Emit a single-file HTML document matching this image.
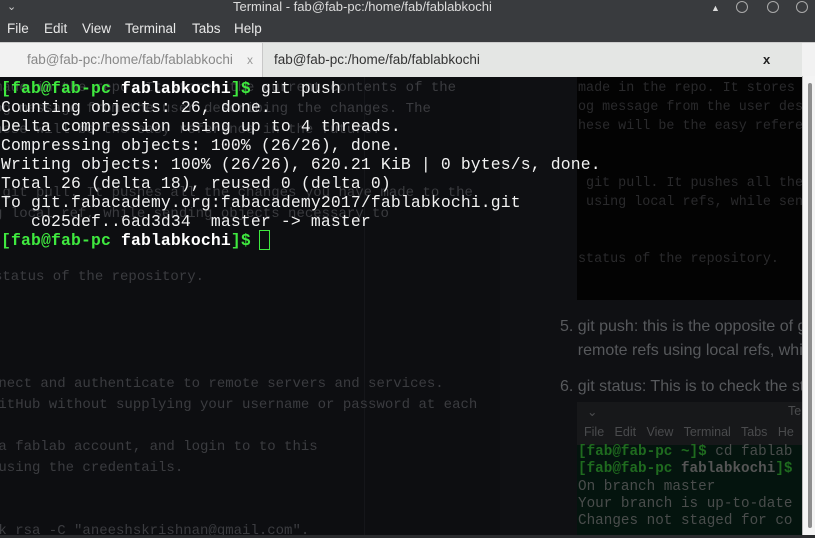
<!DOCTYPE html>
<html><head><meta charset="utf-8"><style>
*{margin:0;padding:0;box-sizing:border-box}
body{width:815px;height:538px;overflow:hidden;background:#0e0f12;font-family:"Liberation Sans",sans-serif;position:relative}
.title{position:absolute;left:0;top:0;width:815px;height:16px;background:#393b3e;color:#dcdcdc;font-size:13px;line-height:14px}
.menu{position:absolute;left:0;top:16px;width:815px;height:26px;background:#393b3e;color:#e8e8e8;font-size:13.5px}
.menu span{position:absolute;top:5px}
.tabs{position:absolute;left:0;top:42px;width:815px;height:35px;background:#f2f2f2;border-top:1px solid #ccc}
.tab2{position:absolute;left:262px;top:0;width:540px;height:34px;background:#e4e6e4;border-left:1px solid #c8c8c8}
.tabs span{position:absolute;font-size:13.5px;top:9px}
.term{position:absolute;left:0;top:77px;width:802px;height:458px;background:#0d0e11;overflow:hidden}
.mono{font-family:"Liberation Mono","DejaVu Sans Mono",monospace;font-size:16.4px;line-height:19px;white-space:pre;position:absolute;letter-spacing:0.16px}
.ghost{color:#3b3c40;font-size:14px;line-height:21px;letter-spacing:0}
.fg{color:#f2f2f2}
.g{color:#3fe83f;font-weight:bold}
.w{color:#fff;font-weight:bold}
.sb{position:absolute;left:802px;top:76px;width:13px;height:459px;background:#f4f4f4;border-left:1px solid #bbb}
.thumb{position:absolute;left:5px;top:7px;width:4px;height:445px;background:#8e8e8e;border-radius:2px}
</style></head><body>
<div class="title">
<span style="position:absolute;left:7px;top:0;color:#ccc;font-size:11px">⌄</span>
<span style="position:absolute;left:233px;top:0">Terminal - fab@fab-pc:/home/fab/fablabkochi</span>
<span style="position:absolute;left:711px;top:1px;font-size:9px">▲</span>
<span style="position:absolute;left:736px;top:1px;width:12px;height:12px;border:1.5px solid #aaa;border-radius:50%"></span>
<span style="position:absolute;left:767px;top:1px;width:12px;height:12px;border:1.5px solid #aaa;border-radius:50%"></span>
<span style="position:absolute;left:796px;top:1px;width:12px;height:12px;border:1.5px solid #aaa;border-radius:50%"></span>
</div>
<div class="menu"><span style="left:7px">File</span><span style="left:44px">Edit</span><span style="left:82px">View</span><span style="left:125px">Terminal</span><span style="left:192px">Tabs</span><span style="left:234px">Help</span></div>
<div class="tabs">
<span style="left:27px;color:#888">fab@fab-pc:/home/fab/fablabkochi</span>
<span style="left:247px;color:#999;font-size:12px;top:10px">x</span>
<div class="tab2"><span style="left:11px;color:#333">fab@fab-pc:/home/fab/fablabkochi</span><span style="left:500px;color:#222;font-size:13px;font-weight:bold;top:9px">x</span></div>
</div>
<div class="term">
<div style="position:absolute;left:364px;top:0;width:1px;height:458px;background:#15161a"></div>
<div style="position:absolute;left:500px;top:0;width:302px;height:458px;background:#0f1013"></div>
<div style="position:absolute;left:577px;top:0;width:225px;height:223px;background:#030303"></div>
<div class="mono ghost" style="left:-6px;top:1px">made in the repo. It stores the current contents of the
og message from the user describing the changes. The
hese will be the easy reference in the future.


 git pull. It pushes all the changes you have made to the
g local ref, while sending objects necessary to


status of the repository.</div>
<div class="mono" style="left:578px;top:2px;color:#2a2a2c;font-size:13.4px;line-height:19px;letter-spacing:0">made in the repo. It stores t
og message from the user desc
hese will be the easy referen


 git pull. It pushes all the
 using local refs, while send


status of the repository.</div>
<div class="mono ghost" style="left:-10px;top:297px">nnect and authenticate to remote servers and services.
 itHub without supplying your username or password at each

 a fablab account, and login to to this
 using the credentails.


 k rsa -C "aneeshskrishnan@gmail.com".
 adding ssh key in</div>
<div style="position:absolute;left:560px;top:238px;color:#57595c;font-size:16px;line-height:24px;white-space:pre">5. git push: this is the opposite of git
    remote refs using local refs, while</div>
<div style="position:absolute;left:560px;top:301px;color:#57595c;font-size:16px;white-space:pre">6. git status: This is to check the sta</div>
<div style="position:absolute;left:577px;top:325px;width:225px;height:45px;background:#17181a;color:#4a4b4d;font-size:12.5px">
<span style="position:absolute;left:10px;top:2px">⌄</span><span style="position:absolute;left:211px;top:2px">Te</span>
<span style="position:absolute;left:7px;top:23px;white-space:pre">File   Edit   View   Terminal   Tabs   He</span></div>
<div style="position:absolute;left:577px;top:368px;width:225px;height:90px;background:#04140e"></div>
<div class="mono" style="left:578px;top:367px;font-size:14.3px;line-height:17.3px;color:#4a4d4c;letter-spacing:0"><span style="color:#1f6b1f;font-weight:bold">[fab@fab-pc ~]$</span> cd fablab
<span style="color:#1f6b1f;font-weight:bold">[fab@fab-pc </span><b style="color:#555">fablabkochi</b><span style="color:#1f6b1f;font-weight:bold">]$</span>
On branch master
Your branch is up-to-date
Changes not staged for co</div>
<div class="mono fg" style="left:1px;top:2px"><span class="g">[fab@fab-pc </span><span class="w">fablabkochi</span><span class="g">]$</span> git push
Counting objects: 26, done.
Delta compression using up to 4 threads.
Compressing objects: 100% (26/26), done.
Writing objects: 100% (26/26), 620.21 KiB | 0 bytes/s, done.
Total 26 (delta 18), reused 0 (delta 0)
To git.fabacademy.org:fabacademy2017/fablabkochi.git
   c025def..6ad3d34  master -&gt; master
<span class="g">[fab@fab-pc </span><span class="w">fablabkochi</span><span class="g">]$</span> </div>
<div style="position:absolute;left:259px;top:153px;width:11px;height:20px;border:1px solid #3fe83f"></div>
</div>
<div class="sb"><div class="thumb"></div></div>
<div style="position:absolute;left:0;top:535px;width:815px;height:3px;background:#2a2b2e"></div>
</body></html>
